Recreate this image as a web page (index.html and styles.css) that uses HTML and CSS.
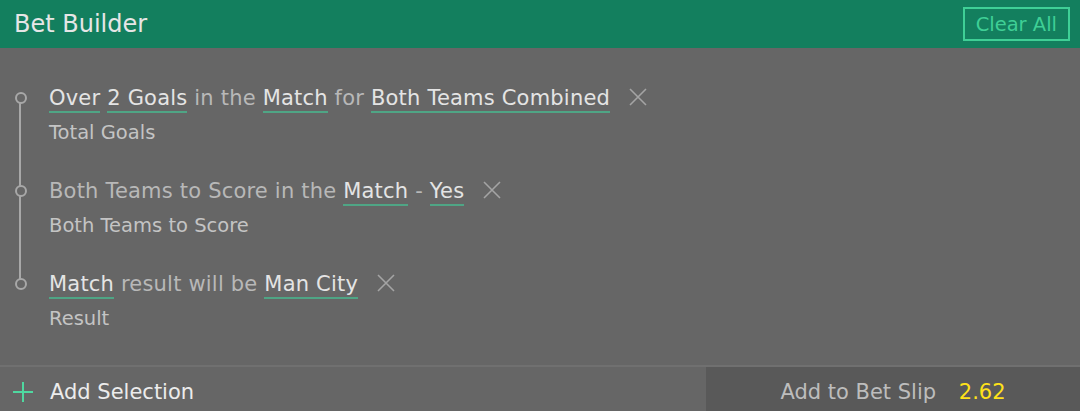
FILE: index.html
```html
<!DOCTYPE html>
<html lang="en">
<head>
    <meta charset="UTF-8">
    <title>Bet Builder</title>
    <link rel="stylesheet" href="styles.css">
</head>
<body>
    <header class="top">
        <h1>Bet Builder</h1>
        <button class="clear">Clear All</button>
    </header>
    <main class="picks">
        <div class="pick">
            <span class="dot"></span>
            <div class="line"><span class="hl">Over</span> <span class="hl">2 Goals</span> in the <span class="hl">Match</span> for <span class="hl">Both Teams Combined</span><svg class="x" width="18" height="18" viewBox="0 0 18 18"><path d="M1 1l16 16M17 1L1 17"/></svg></div>
            <div class="market">Total Goals</div>
        </div>
        <div class="pick">
            <span class="dot"></span>
            <div class="line">Both Teams to Score in the <span class="hl">Match</span> - <span class="hl">Yes</span><svg class="x" width="18" height="18" viewBox="0 0 18 18"><path d="M1 1l16 16M17 1L1 17"/></svg></div>
            <div class="market">Both Teams to Score</div>
        </div>
        <div class="pick last">
            <span class="dot"></span>
            <div class="line"><span class="hl">Match</span> result will be <span class="hl">Man City</span><svg class="x" width="18" height="18" viewBox="0 0 18 18"><path d="M1 1l16 16M17 1L1 17"/></svg></div>
            <div class="market">Result</div>
        </div>
    </main>
    <footer class="bottom">
        <div class="add">
            <svg width="22" height="22" viewBox="0 0 22 22"><path d="M11 1v20M1 11h20" stroke="#4fd8a0" stroke-width="2"/></svg>
            <span>Add Selection</span>
        </div>
        <div class="slip">Add to Bet Slip <span class="odds">2.62</span></div>
    </footer>
</body>
</html>
```
FILE: styles.css
```css
body {
    margin: 0;
    width: 1080px;
    height: 411px;
    background: #666;
    font-family: "DejaVu Sans", "Noto Sans", sans-serif;
    overflow: hidden;
}
.top {
    height: 48px;
    background: #137f5e;
    display: flex;
    align-items: center;
    justify-content: space-between;
    padding: 0 10px 0 14px;
}
.top h1 {
    margin: 0;
    font-size: 24px;
    font-weight: normal;
    color: #e6e6e6;
}
.clear {
    height: 34px;
    padding: 0 11px;
    background: transparent;
    border: 2px solid #3fcf96;
    color: #3fcf96;
    font-family: inherit;
    font-size: 19.5px;
}
.picks {
    height: 319px;
    padding-top: 37px;
    box-sizing: border-box;
    border-bottom: 2px solid #707070;
}
.pick {
    position: relative;
    padding-left: 49px;
    height: 93px;
}
.pick::before {
    content: "";
    position: absolute;
    left: 19px;
    top: 12px;
    width: 2px;
    height: 93px;
    background: #a8a8a8;
}
.pick.last::before {
    display: none;
}
.dot {
    position: absolute;
    left: 15px;
    top: 7px;
    width: 8px;
    height: 8px;
    border: 2px solid #a8a8a8;
    border-radius: 50%;
    background: #666;
    z-index: 1;
}
.line {
    font-size: 21px;
    letter-spacing: 0.2px;
    line-height: 26px;
    color: #b8b8b8;
    white-space: nowrap;
}
.hl {
    color: #e4e4e4;
    border-bottom: 2px solid #4fa585;
    padding-bottom: 1px;
}
.x {
    margin-left: 19px;
    vertical-align: -1px;
    stroke: #a4a4a4;
    stroke-width: 1.6;
}
.market {
    margin-top: 10px;
    font-size: 19.5px;
    color: #c4c4c4;
}
.bottom {
    display: flex;
    height: 44px;
}
.add {
    flex: 1;
    display: flex;
    align-items: center;
    gap: 16px;
    padding: 5px 0 0 12px;
    font-size: 21px;
    color: #ececec;
}
.slip {
    width: 374px;
    background: #595959;
    display: flex;
    align-items: center;
    justify-content: center;
    white-space: pre;
    padding-top: 5px;
    font-size: 21px;
    color: #bdbdbd;
}
.odds {
    color: #ffe11a;
    margin-left: 16px;
}
```
